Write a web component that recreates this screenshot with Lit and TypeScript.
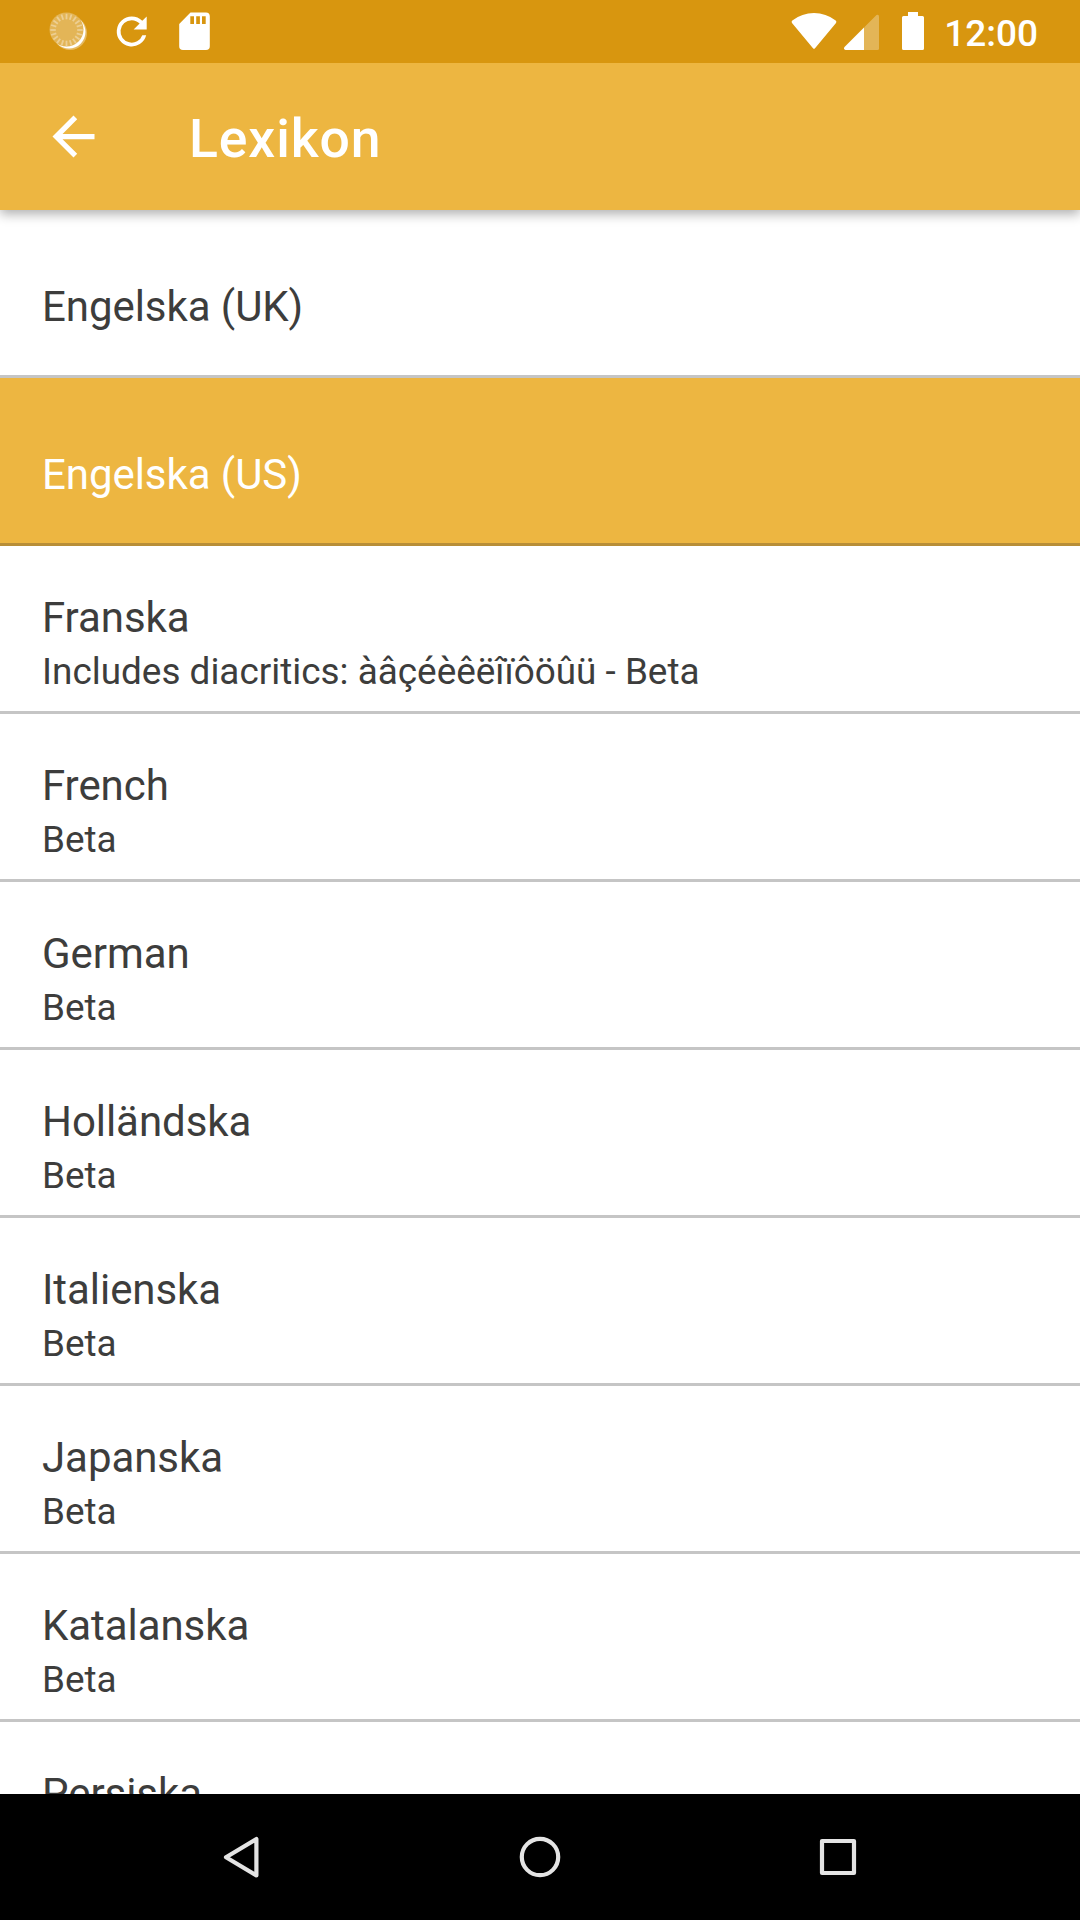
import { LitElement, html, css, svg } from "lit";
import { customElement } from "lit/decorators.js";

interface Dictionary {
  name: string;
  note?: string;
  selected?: boolean;
}

const DICTIONARIES: Dictionary[] = [
  { name: "Engelska (UK)" },
  { name: "Engelska (US)", selected: true },
  { name: "Franska", note: "Includes diacritics: àâçéèêëîïôöûü - Beta" },
  { name: "French", note: "Beta" },
  { name: "German", note: "Beta" },
  { name: "Holländska", note: "Beta" },
  { name: "Italienska", note: "Beta" },
  { name: "Japanska", note: "Beta" },
  { name: "Katalanska", note: "Beta" },
  { name: "Persiska", note: "" },
];

@customElement("status-bar")
class StatusBar extends LitElement {
  static styles = css`
    :host {
      display: flex;
      justify-content: space-between;
      height: 63px;
      background: #d8960f;
      color: #fff;
      font: 500 37px/67px Roboto, sans-serif;
      position: relative;
      z-index: 2;
    }
    .group {
      display: flex;
    }
    svg {
      display: block;
    }
    .clock {
      padding-right: 42px;
    }
  `;

  render() {
    const ticks = Array.from({ length: 20 }, (_, i) => i * 18);
    return html`
      <div class="group">
        <svg width="220" height="63" viewBox="0 0 220 63" fill="#fff">
          <circle cx="70" cy="33" r="17" fill-opacity=".35" />
          <circle cx="69" cy="32" r="16.5" />
          <circle cx="66.5" cy="29.5" r="17" fill="#e3b557" />
          <g stroke="#edcf93" stroke-width="1.8">
            ${ticks.map((a) => svg`<path d="M66.500 13.800v5.500" transform="rotate(${a} 66.500 30)" />`)}
          </g>
          <path
            transform="translate(109.300 9) scale(1.870)"
            d="M17.65 6.35A7.96 7.96 0 0 0 12 4a8 8 0 1 0 7.730 10h-2.080A6 6 0 1 1 12 6c1.660 0 3.140.690 4.220 1.780L13 11h7V4z"
          />
          <path
            fill-rule="evenodd"
            d="M190.500 12.500h15.500a3.800 3.800 0 0 1 3.800 3.800v30a3.800 3.800 0 0 1-3.800 3.800h-23a3.800 3.800 0 0 1-3.800-3.800V24zM190.300 16.300v7.700h3.700v-7.700zM196.200 16.300v7.700h3.700v-7.700zM202 16.300v7.700h3.700v-7.700z"
          />
        </svg>
      </div>
      <div class="group">
        <svg width="159" height="63" viewBox="785 0 159 63" fill="#fff">
          <path d="M792.300 20.500Q802 13 814 13T835.700 20.500Q837 21.500 836 23L815 48.200Q814 49.500 813 48.200L792 23Q791 21.500 792.300 20.500z" />
          <path fill="#e3b557" d="M864 27.500L876.500 15Q879 14 879 16.500V48.500Q879 50 877.500 50H864z" />
          <path d="M864 27.500V50H845.500Q843 49 844.500 47z" />
          <path d="M908 12h10v4h4.500a1.500 1.500 0 0 1 1.500 1.500v31a1.500 1.500 0 0 1-1.500 1.500h-19a1.500 1.500 0 0 1-1.500-1.500v-31a1.500 1.500 0 0 1 1.500-1.500h4.500z" />
        </svg>
        <span class="clock">12:00</span>
      </div>
    `;
  }
}

@customElement("app-bar")
class AppBar extends LitElement {
  static styles = css`
    :host {
      display: flex;
      align-items: center;
      height: 147px;
      background: #edb641;
      color: #fff;
      box-shadow: 0 4px 11px rgba(0, 0, 0, 0.32);
      position: relative;
      z-index: 1;
    }
    svg {
      display: block;
      flex: none;
      margin: 0 84px 0 42px;
    }
    h1 {
      margin: 0;
      padding-top: 5px;
      font: 500 53.5px/62px Roboto, sans-serif;
      letter-spacing: 0.9px;
    }
  `;

  render() {
    return html`
      <svg width="63" height="63" viewBox="0 0 24 24" fill="#fff">
        <path d="M20 11H7.830l5.590-5.590L12 4l-8 8 8 8 1.410-1.410L7.830 13H20z" />
      </svg>
      <h1>Lexikon</h1>
    `;
  }
}

@customElement("dictionary-list")
class DictionaryList extends LitElement {
  static styles = css`
    :host {
      display: block;
      background: #fff;
      overflow: hidden;
      font-family: Roboto, sans-serif;
      color: #3d3d3c;
    }
    .row {
      display: flex;
      flex-direction: column;
      box-sizing: border-box;
      height: 168px;
      padding: 47px 42px 0;
      border-bottom: 3px solid #c5c5c5;
    }
    .single {
      padding-top: 72px;
    }
    .selected {
      background: #edb641;
      border-bottom-color: #b88e37;
      color: #fff;
    }
    .name {
      font-size: 42px;
      line-height: 50px;
      letter-spacing: -0.06px;
    }
    .note {
      margin-top: 7px;
      font-size: 36.9px;
      line-height: 44px;
      white-space: nowrap;
    }
  `;

  render() {
    return DICTIONARIES.map(
      (d) => html`
        <div class="row ${d.note === undefined ? "single" : ""} ${d.selected ? "selected" : ""}">
          <span class="name">${d.name}</span>
          ${d.note ? html`<span class="note">${d.note}</span>` : ""}
        </div>
      `,
    );
  }
}

@customElement("navigation-bar")
class NavigationBar extends LitElement {
  static styles = css`
    :host {
      display: flex;
      justify-content: center;
      gap: 234px;
      height: 126px;
      background: #000;
    }
    svg {
      display: block;
      width: 64px;
      height: 126px;
      fill: none;
      stroke: #e4e4e4;
      stroke-width: 4.200;
      stroke-linejoin: round;
    }
  `;

  render() {
    return html`
      <svg viewBox="210 0 64 126"><path d="M256.400 45v36.400L226 63.200z" /></svg>
      <svg viewBox="508 0 64 126"><circle cx="540" cy="63" r="18.200" /></svg>
      <svg viewBox="806 0 64 126"><rect x="822" y="47" width="32" height="32" /></svg>
    `;
  }
}

@customElement("app-root")
class AppRoot extends LitElement {
  static styles = css`
    :host {
      display: flex;
      flex-direction: column;
      width: 1080px;
      height: 1920px;
      overflow: hidden;
    }
    status-bar,
    app-bar,
    navigation-bar {
      flex: none;
    }
    dictionary-list {
      flex: 1;
      min-height: 0;
    }
  `;

  render() {
    return html`
      <status-bar></status-bar>
      <app-bar></app-bar>
      <dictionary-list></dictionary-list>
      <navigation-bar></navigation-bar>
    `;
  }
}
